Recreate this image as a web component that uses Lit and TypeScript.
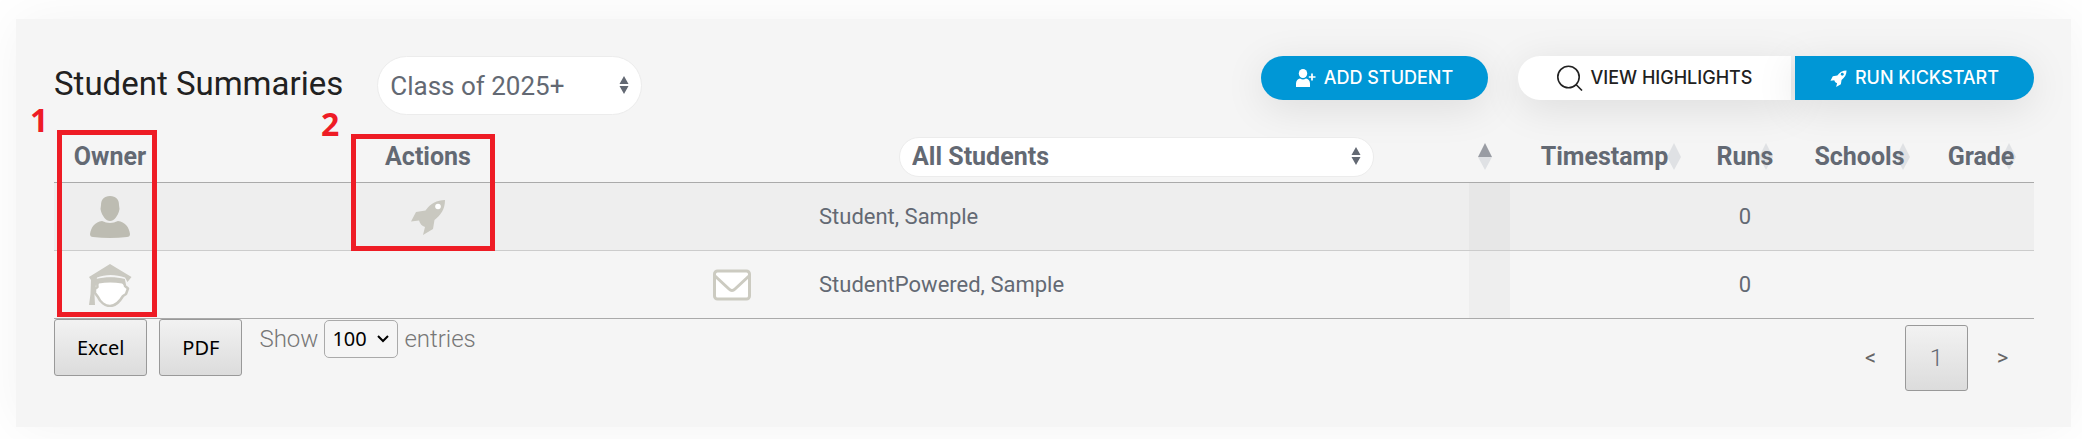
import { LitElement, html, svg, css, nothing } from "lit";
import { customElement, property, state } from "lit/decorators.js";

type Owner = "counselor" | "student";

interface Student {
  name: string;
  owner: Owner;
  canRun: boolean;
  canMail: boolean;
  runs: number;
}

const STUDENTS: Student[] = [
  { name: "Student, Sample", owner: "counselor", canRun: true, canMail: false, runs: 0 },
  { name: "StudentPowered, Sample", owner: "student", canRun: false, canMail: true, runs: 0 },
];

const rocketShape = svg`
  <path d="M35 1C27 1 20 5 15.500 11.500L6 13L1 22.500L9 21.500C10 25 12 27 15 28L13 36L23 30L24.500 21C31 16 35 10 35 1Z"></path>`;

@customElement("owner-icon")
class OwnerIcon extends LitElement {
  @property() kind: Owner = "counselor";

  static styles = css`
    :host { display: inline-block; }
    svg { display: block; }
    .solid { fill: #bdbcb2; }
    .soft { fill: #cac9c1; }
    .face { fill: #fff; stroke: #cac9c1; stroke-width: 2.5; stroke-linejoin: round; }
  `;

  render() {
    return this.kind === "counselor"
      ? html`<svg width="42" height="42" viewBox="0 0 42 42" role="img" aria-label="Counselor">
          <path class="solid" d="M21 0C27 0 30 3.500 30 9L30.500 13C30 17 28 20 26.500 22C25 24 23 25 21 25C19 25 17 24 15.500 22C14 20 12 17 11.500 13L12 9C12 3.500 15 0 21 0Z"></path>
          <path class="solid" d="M13 25C16 26 18 27 21 27C24 27 26 26 29 25C36 26 40 31 41 38C41 40 40 41 38 41C27 42.300 15 42.300 4 41C2 41 1 40 1 38C2 31 6 26 13 25Z"></path>
        </svg>`
      : html`<svg width="44" height="44" viewBox="0 0 44 44" role="img" aria-label="Student">
          <path class="soft" d="M22 1L43.500 14L39.500 19L37 14.500C28 11 17 11 9 14.500L6.500 32L7 42L1 42L2.500 31L3 17L1 14Z"></path>
          <path class="face" d="M9 18C17 15.500 28 15.500 36 18L37 23L40 25.500L38 31L35 33C32 38 27 43 22 43C17 43 12 39 10 34L7 30L7 26L9.500 24Z"></path>
          <path class="soft" d="M8 16C17 13.500 28 13.500 37 16L37 23L34 20.500C26 19 18 19 11 20.500L9 23Z"></path>
        </svg>`;
  }
}

@customElement("app-root")
class AppRoot extends LitElement {
  @state() private students = STUDENTS;

  static styles = css`
    :host {
      display: block;
      box-sizing: border-box;
      min-height: 100vh;
      padding: 19px 11px 12px 16px;
      background: #fff;
      overflow: hidden;
      color: #636973;
      font: 22px/28px Roboto, "Liberation Sans", sans-serif;
    }
    * { box-sizing: border-box; }
    svg { display: block; }
    button, select { font: inherit; color: inherit; cursor: pointer; }

    .card {
      position: relative;
      padding: 37px 37px 36px 38px;
      background: #f5f5f5;
      box-shadow: 0 0 50px rgba(0, 0, 0, 0.05);
    }

    .top { display: flex; align-items: flex-start; }
    .title { margin: 0; font-size: 33px; line-height: 56px; font-weight: 400; color: #212121; }
    .pill {
      appearance: none;
      border: 1px solid #ececec;
      background-color: #fff;
      background-image: url("data:image/svg+xml,%3Csvg xmlns='http://www.w3.org/2000/svg' width='10' height='18'%3E%3Cpath d='M5 0L9.500 8H.5ZM5 18L9.500 10H.5Z' fill='%23636973'/%3E%3C/svg%3E");
      background-repeat: no-repeat;
    }
    .year {
      width: 265px;
      height: 59px;
      margin-left: 34px;
      padding: 0 32px 0 12px;
      border-radius: 30px;
      font-size: 26px;
      line-height: 32px;
      background-position: right 12px top 19px;
    }
    .tools { display: flex; gap: 30px; margin-left: auto; }
    .group { display: flex; gap: 4px; }
    .btn {
      display: flex;
      align-items: center;
      justify-content: center;
      gap: 8px;
      min-width: 227px;
      height: 44px;
      padding: 0 30px;
      border: 0;
      border-radius: 22px;
      background: #0097d6;
      color: #fff;
      font: 500 18px/24px Inter, "Open Sans", sans-serif;
      white-space: nowrap;
      box-shadow: 0 8px 40px rgba(0, 0, 0, 0.1);
    }
    .light { min-width: 273px; background: #fff; color: #212121; border-radius: 22px 0 0 22px; }
    .last { min-width: 239px; border-radius: 0 22px 22px 0; }

    table {
      width: 100%;
      margin-top: 17px;
      border-spacing: 0;
      table-layout: fixed;
    }
    .c-owner { width: 112px; }
    .c-gap { width: 174px; }
    .c-actions { width: 176px; }
    .c-mail { width: 144px; }
    .c-sort { width: 41px; }
    .c-time { width: 189px; }
    .c-runs { width: 92px; }
    .c-schools { width: 137px; }
    .c-grade { width: 106px; }
    th, td { padding: 0; text-align: center; vertical-align: middle; }
    th {
      position: relative;
      height: 51px;
      border-bottom: 1px solid #aaa;
      font-size: 25px;
      font-weight: 700;
    }
    td { height: 68px; border-bottom: 1px solid #ccc; }
    tr:last-child td { border-bottom-color: #aaa; }
    tbody tr:nth-child(odd) td { background: #eee; }
    td.sorted { background: #eee; }
    tbody tr:nth-child(odd) td.sorted { background: #e7e7e7; }
    td.name { padding-left: 15px; text-align: left; }
    td svg { display: inline-block; vertical-align: middle; }
    td owner-icon { vertical-align: middle; }
    .who {
      display: block;
      width: 475px;
      height: 40px;
      margin: 0 auto;
      padding: 0 32px 0 12px;
      border-radius: 20px;
      font-weight: 700;
      background-position: right 12px top 9px;
    }
    .label { position: relative; z-index: 1; }
    .arrows { position: absolute; right: 18px; top: 11px; }
    .up, .down { fill: #dfe1e4; }
    .active .up { fill: #999ca3; }
    .ghost { padding: 0; border: 0; background: none; }

    .foot { display: flex; align-items: flex-start; }
    .plain {
      height: 57px;
      margin-right: 12px;
      padding: 0 22px;
      border: 1px solid #999;
      border-radius: 3px;
      background: linear-gradient(#f2f2f2, #dcdcdc);
      color: #000;
      font: 20px/28px "Noto Sans", sans-serif;
    }
    .length {
      display: flex;
      align-items: center;
      gap: 6px;
      margin: 1px 0 0 5px;
      color: #777;
      font-size: 24px;
      font-weight: 300;
    }
    .count {
      appearance: none;
      width: 74px;
      height: 38px;
      padding: 0 7px;
      border: 1px solid #aaa;
      border-radius: 5px;
      background: url("data:image/svg+xml,%3Csvg xmlns='http://www.w3.org/2000/svg' width='12' height='8'%3E%3Cpath d='M1 1L6 6L11 1' fill='none' stroke='%23000' stroke-width='2'/%3E%3C/svg%3E") no-repeat right 8px center;
      color: #000;
      font: 20px/28px "Noto Sans", sans-serif;
    }
    .pager { display: flex; margin-left: auto; padding-top: 6px; }
    .page {
      min-width: 63px;
      height: 66px;
      padding: 0;
      border: 1px solid transparent;
      border-radius: 3px;
      background: none;
      font-size: 24px;
      font-weight: 300;
    }
    .step { color: #666; font-size: 22px; font-weight: 400; }
    .current { margin: 0 3px; border-color: #999; background: linear-gradient(#f2f2f2, #dcdcdc); }

    .mark { position: absolute; border: 5px solid #ee1c25; pointer-events: none; }
    .mark-owner { left: 41px; top: 111px; width: 100px; height: 187px; }
    .mark-actions { left: 335px; top: 115px; width: 144px; height: 117px; }
    .num { position: absolute; color: #ee1c25; font: 700 32px/32px "Open Sans", "Noto Sans", sans-serif; }
    .num-owner { left: 14px; top: 85px; }
    .num-actions { left: 305px; top: 89px; }
  `;

  private sortable(text: string, active = false) {
    return html`<th scope="col" class=${active ? "active" : ""} aria-sort=${active ? "ascending" : "none"}>
      <svg class="arrows" width="14" height="27" viewBox="0 0 14 27" aria-hidden="true">
        <path class="up" d="M7 0L14 14H0Z"></path>
        <path class="down" d="M0 14H14L7 27Z"></path>
      </svg>
      <span class="label">${text}</span>
    </th>`;
  }

  private row(s: Student) {
    return html`<tr>
      <td><owner-icon kind=${s.owner}></owner-icon></td>
      <td></td>
      <td>${s.canRun
        ? html`<button class="ghost" aria-label="Run">
            <svg width="36" height="36" viewBox="0 0 36 36" fill="#c9c8c0">${rocketShape}<circle cx="28" cy="7.500" r="2.800" fill="#fff"></circle></svg>
          </button>`
        : nothing}</td>
      <td></td>
      <td>${s.canMail
        ? html`<button class="ghost" aria-label="Email">
            <svg width="38" height="32" viewBox="0 0 38 32" fill="#fff" stroke="#cccbc1" stroke-width="3" stroke-linejoin="round">
              <rect x="1.500" y="2" width="35" height="28" rx="3"></rect>
              <path d="M2 7L16 20C18 22 20 22 22 20L36 7" fill="none"></path>
            </svg>
          </button>`
        : nothing}</td>
      <td class="name">${s.name}</td>
      <td class="sorted"></td>
      <td></td>
      <td>${s.runs}</td>
      <td></td>
      <td></td>
    </tr>`;
  }

  render() {
    return html`
      <main class="card">
        <header class="top">
          <h1 class="title">Student Summaries</h1>
          <select class="pill year" aria-label="Class year"><option>Class of 2025+</option></select>
          <div class="tools">
            <button class="btn">
              <svg width="20" height="18" viewBox="0 0 20 18" fill="#fff" aria-hidden="true">
                <ellipse cx="7" cy="4.500" rx="4.200" ry="4.500"></ellipse>
                <path d="M0 18V14.500C0 11.500 2 10 4 9.500C6 10.800 8 10.800 10 9.500C12 10 14 11.500 14 14.500V18Z"></path>
                <path d="M16 4.500V11.500M12.800 8H19.500" stroke="#fff" stroke-width="1.700"></path>
              </svg>
              ADD STUDENT
            </button>
            <div class="group">
              <button class="btn light">
                <svg width="26" height="26" viewBox="0 0 26 26" fill="none" stroke="#212121" stroke-width="1.600" aria-hidden="true">
                  <circle cx="11.500" cy="12" r="10.700"></circle>
                  <path d="M19 19.500L25 25.500"></path>
                </svg>
                VIEW HIGHLIGHTS
              </button>
              <button class="btn last">
                <svg width="17" height="17" viewBox="0 0 36 36" fill="#fff" aria-hidden="true">${rocketShape}<circle cx="26" cy="9" r="3" fill="#0097d6"></circle></svg>
                RUN KICKSTART
              </button>
            </div>
          </div>
        </header>

        <table>
          <colgroup>
            <col class="c-owner" /><col class="c-gap" /><col class="c-actions" /><col class="c-mail" />
            <col class="c-mail" /><col /><col class="c-sort" /><col class="c-time" />
            <col class="c-runs" /><col class="c-schools" /><col class="c-grade" />
          </colgroup>
          <thead>
            <tr>
              <th scope="col">Owner</th>
              <th></th>
              <th scope="col">Actions</th>
              <th></th>
              <th></th>
              <th scope="col">
                <select class="pill who" aria-label="Student filter"><option>All Students</option></select>
              </th>
              ${this.sortable("", true)} ${this.sortable("Timestamp")} ${this.sortable("Runs")}
              ${this.sortable("Schools")} ${this.sortable("Grade")}
            </tr>
          </thead>
          <tbody>${this.students.map((s) => this.row(s))}</tbody>
        </table>

        <footer class="foot">
          <button class="plain">Excel</button>
          <button class="plain">PDF</button>
          <label class="length">
            Show
            <select class="count"><option>100</option></select>
            entries
          </label>
          <nav class="pager" aria-label="Pages">
            <button class="page step" aria-label="Previous">&lt;</button>
            <button class="page current" aria-current="page">1</button>
            <button class="page step" aria-label="Next">&gt;</button>
          </nav>
        </footer>

        <div class="mark mark-owner"></div>
        <div class="mark mark-actions"></div>
        <span class="num num-owner">1</span>
        <span class="num num-actions">2</span>
      </main>
    `;
  }
}
